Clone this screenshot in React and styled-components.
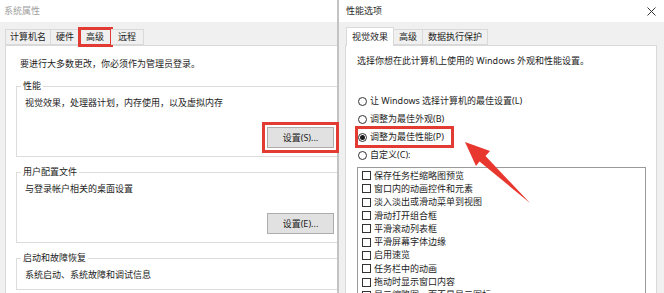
import styled, { createGlobalStyle } from "styled-components";

const Global = createGlobalStyle`
html, body {
  margin: 0;
  padding: 0;
  height: 293px;
  overflow: hidden;
  background: #f0f0f0;
}
body {
  font-family: "Noto Sans", "Noto Sans CJK SC", sans-serif;
  font-size: 9px;
  color: #1c1c1c;
}
`;

const Screen = styled.div`
position: relative;
display: flex;
height: 293px;
width: 664px;
overflow: hidden;
`;

const Window = styled.div`
display: flex;
flex-direction: column;
width: ${p => p.$width || "auto"};
flex: ${p => p.$width ? "none" : "1"};
border-right: ${p => p.$edge ? "2px solid #c3c3c3" : "none"};
`;

const TitleBar = styled.div`
height: 22px;
flex: none;
display: flex;
align-items: center;
justify-content: space-between;
padding: 0 8px 0 ${p => p.$pad || 4}px;
background: #fff;
color: ${p => p.$muted ? "#a0a0a0" : "#2a2a2a"};
line-height: 12px;
`;

const Body = styled.div`
flex: 1;
display: flex;
flex-direction: column;
background: #f0f0f0;
padding: 5px ${p => p.$right || 0}px 0 ${p => p.$left || 0}px;
min-height: 0;
`;

const TabStrip = styled.div`
display: flex;
align-items: flex-end;
height: 18px;
padding-left: ${p => p.$indent || 0}px;
flex: none;
`;

const Tab = styled.div`
position: relative;
height: ${p => p.$active ? 19 : 16}px;
margin-bottom: ${p => p.$active ? -1 : 0}px;
padding: 0 ${p => p.$pad || 5}px;
display: flex;
align-items: center;
line-height: 12px;
background: ${p => p.$active ? "#fff" : "#f0f0f0"};
border: 1px solid #d9d9d9;
border-bottom: ${p => p.$active ? "none" : "1px solid #d9d9d9"};
border-left: ${p => p.$first || p.$active ? "1px solid #d9d9d9" : "none"};
z-index: ${p => p.$active ? 2 : 1};
box-sizing: border-box;
outline: ${p => p.$marked ? "3px solid #e23b33" : "none"};
outline-offset: -1px;
`;

const Panel = styled.div`
flex: 1;
background: #fff;
border: 1px solid #d9d9d9;
border-right: ${p => p.$open ? "none" : "1px solid #d9d9d9"};
border-bottom: none;
padding: ${p => p.$pad};
display: flex;
flex-direction: column;
min-height: 0;
`;

const Line = styled.div`
line-height: 12px;
height: 12px;
white-space: nowrap;
padding-left: ${p => p.$indent || 0}px;
margin-top: ${p => p.$top || 0}px;
`;

const Group = styled.fieldset`
margin: ${p => p.$top || 0}px 0 0 0;
padding: 0 3px 8px 8px;
border: 1px solid #dcdcdc;
border-right: none;
min-width: 0;
`;

const Legend = styled.legend`
padding: 0 2px;
margin-left: -4px;
line-height: 12px;
white-space: nowrap;
`;

const ButtonRow = styled.div`
display: flex;
justify-content: flex-end;
margin-top: 18px;
`;

const Button = styled.button`
width: 67px;
height: 21px;
padding: 0;
font: inherit;
font-size: 9px;
color: #1c1c1c;
background: #e1e1e1;
border: 1px solid #adadad;
outline: ${p => p.$marked ? "3px solid #e23b33" : "none"};
outline-offset: 2px;
`;

const Radios = styled.div`
margin-top: 25px;
display: flex;
flex-direction: column;
align-items: flex-start;
`;

const RadioRow = styled.div`
display: flex;
align-items: center;
height: 18px;
padding: 0 8px 0 1px;
gap: 3px;
white-space: nowrap;
line-height: 12px;
outline: ${p => p.$marked ? "3px solid #e23b33" : "none"};
outline-offset: -1px;
`;

const RadioDot = styled.span`
width: 9px;
height: 9px;
box-sizing: border-box;
border: 1px solid #333;
border-radius: 50%;
background: #fff;
display: flex;
align-items: center;
justify-content: center;
&::after {
  content: "";
  width: 5px;
  height: 5px;
  border-radius: 50%;
  background: ${p => p.$on ? "#1c1c1c" : "transparent"};
}
`;

const ListBox = styled.div`
margin: 3px 10px 0 0;
flex: 1;
border: 1px solid #9a9a9a;
border-bottom: none;
padding: 1px 0 0 4px;
background: #fff;
`;

const Item = styled.div`
display: flex;
align-items: center;
gap: 3px;
height: 13.3px;
line-height: 12px;
white-space: nowrap;
`;

const Box = styled.span`
width: 9px;
height: 9px;
box-sizing: border-box;
border: 1px solid #333;
background: #fff;
flex: none;
`;

const Overlay = styled.svg`
position: absolute;
left: 0;
top: 0;
pointer-events: none;
z-index: 5;
`;

const items = [
  "保存任务栏缩略图预览",
  "窗口内的动画控件和元素",
  "淡入淡出或滑动菜单到视图",
  "滑动打开组合框",
  "平滑滚动列表框",
  "平滑屏幕字体边缘",
  "启用速览",
  "任务栏中的动画",
  "拖动时显示窗口内容",
  "显示缩略图，而不是显示图标",
];

const radios = [
  { label: "让 Windows 选择计算机的最佳设置(L)" },
  { label: "调整为最佳外观(B)" },
  { label: "调整为最佳性能(P)", on: true },
  { label: "自定义(C):" },
];

const App = () => {
  return (
    <Screen>
      <Global />
      <Window $width="337px" $edge>
        <TitleBar $muted>系统属性</TitleBar>
        <Body $left={5}>
          <TabStrip $indent={0}>
            <Tab $first $pad={4}>计算机名</Tab>
            <Tab $pad={5}>硬件</Tab>
            <Tab $pad={6} $marked>高级</Tab>
            <Tab $pad={7}>远程</Tab>
          </TabStrip>
          <Panel $open $pad="12px 0 0 10px">
            <Line $indent={4}>要进行大多数更改，你必须作为管理员登录。</Line>
            <Group $top={10}>
              <Legend>性能</Legend>
              <Line $top={5}>视觉效果，处理器计划，内存使用，以及虚拟内存</Line>
              <ButtonRow>
                <Button $marked>设置(S)...</Button>
              </ButtonRow>
            </Group>
            <Group $top={9}>
              <Legend>用户配置文件</Legend>
              <Line $top={5}>与登录帐户相关的桌面设置</Line>
              <ButtonRow>
                <Button>设置(E)...</Button>
              </ButtonRow>
            </Group>
            <Group $top={9}>
              <Legend>启动和故障恢复</Legend>
              <Line $top={5}>系统启动、系统故障和调试信息</Line>
            </Group>
          </Panel>
        </Body>
      </Window>

      <Window>
        <TitleBar $pad={7}>
          <span>性能选项</span>
          <svg width="9" height="9" viewBox="0 0 9 9">
            <path d="M0.5 0.5 L8.5 8.5 M8.5 0.5 L0.5 8.5" stroke="#333" strokeWidth="1" />
          </svg>
        </TitleBar>
        <Body $left={6} $right={7}>
          <TabStrip $indent={1}>
            <Tab $active $pad={5}>视觉效果</Tab>
            <Tab $pad={5}>高级</Tab>
            <Tab $pad={5}>数据执行保护</Tab>
          </TabStrip>
          <Panel $pad="9px 0 0 11px">
            <Line>选择你想在此计算机上使用的 Windows 外观和性能设置。</Line>
            <Radios>
              {radios.map(r => (
                <RadioRow key={r.label} $marked={r.on}>
                  <RadioDot $on={r.on} />
                  <span>{r.label}</span>
                </RadioRow>
              ))}
            </Radios>
            <ListBox>
              {items.map(t => (
                <Item key={t}>
                  <Box />
                  <span>{t}</span>
                </Item>
              ))}
            </ListBox>
          </Panel>
        </Body>
      </Window>

      <Overlay width="664" height="293" viewBox="0 0 664 293">
        <polygon
          points="465,142 490,151 485.5,156 530,203 479.5,161.5 476,166"
          fill="#e8372f"
        />
      </Overlay>
    </Screen>
  );
};

export default App;
